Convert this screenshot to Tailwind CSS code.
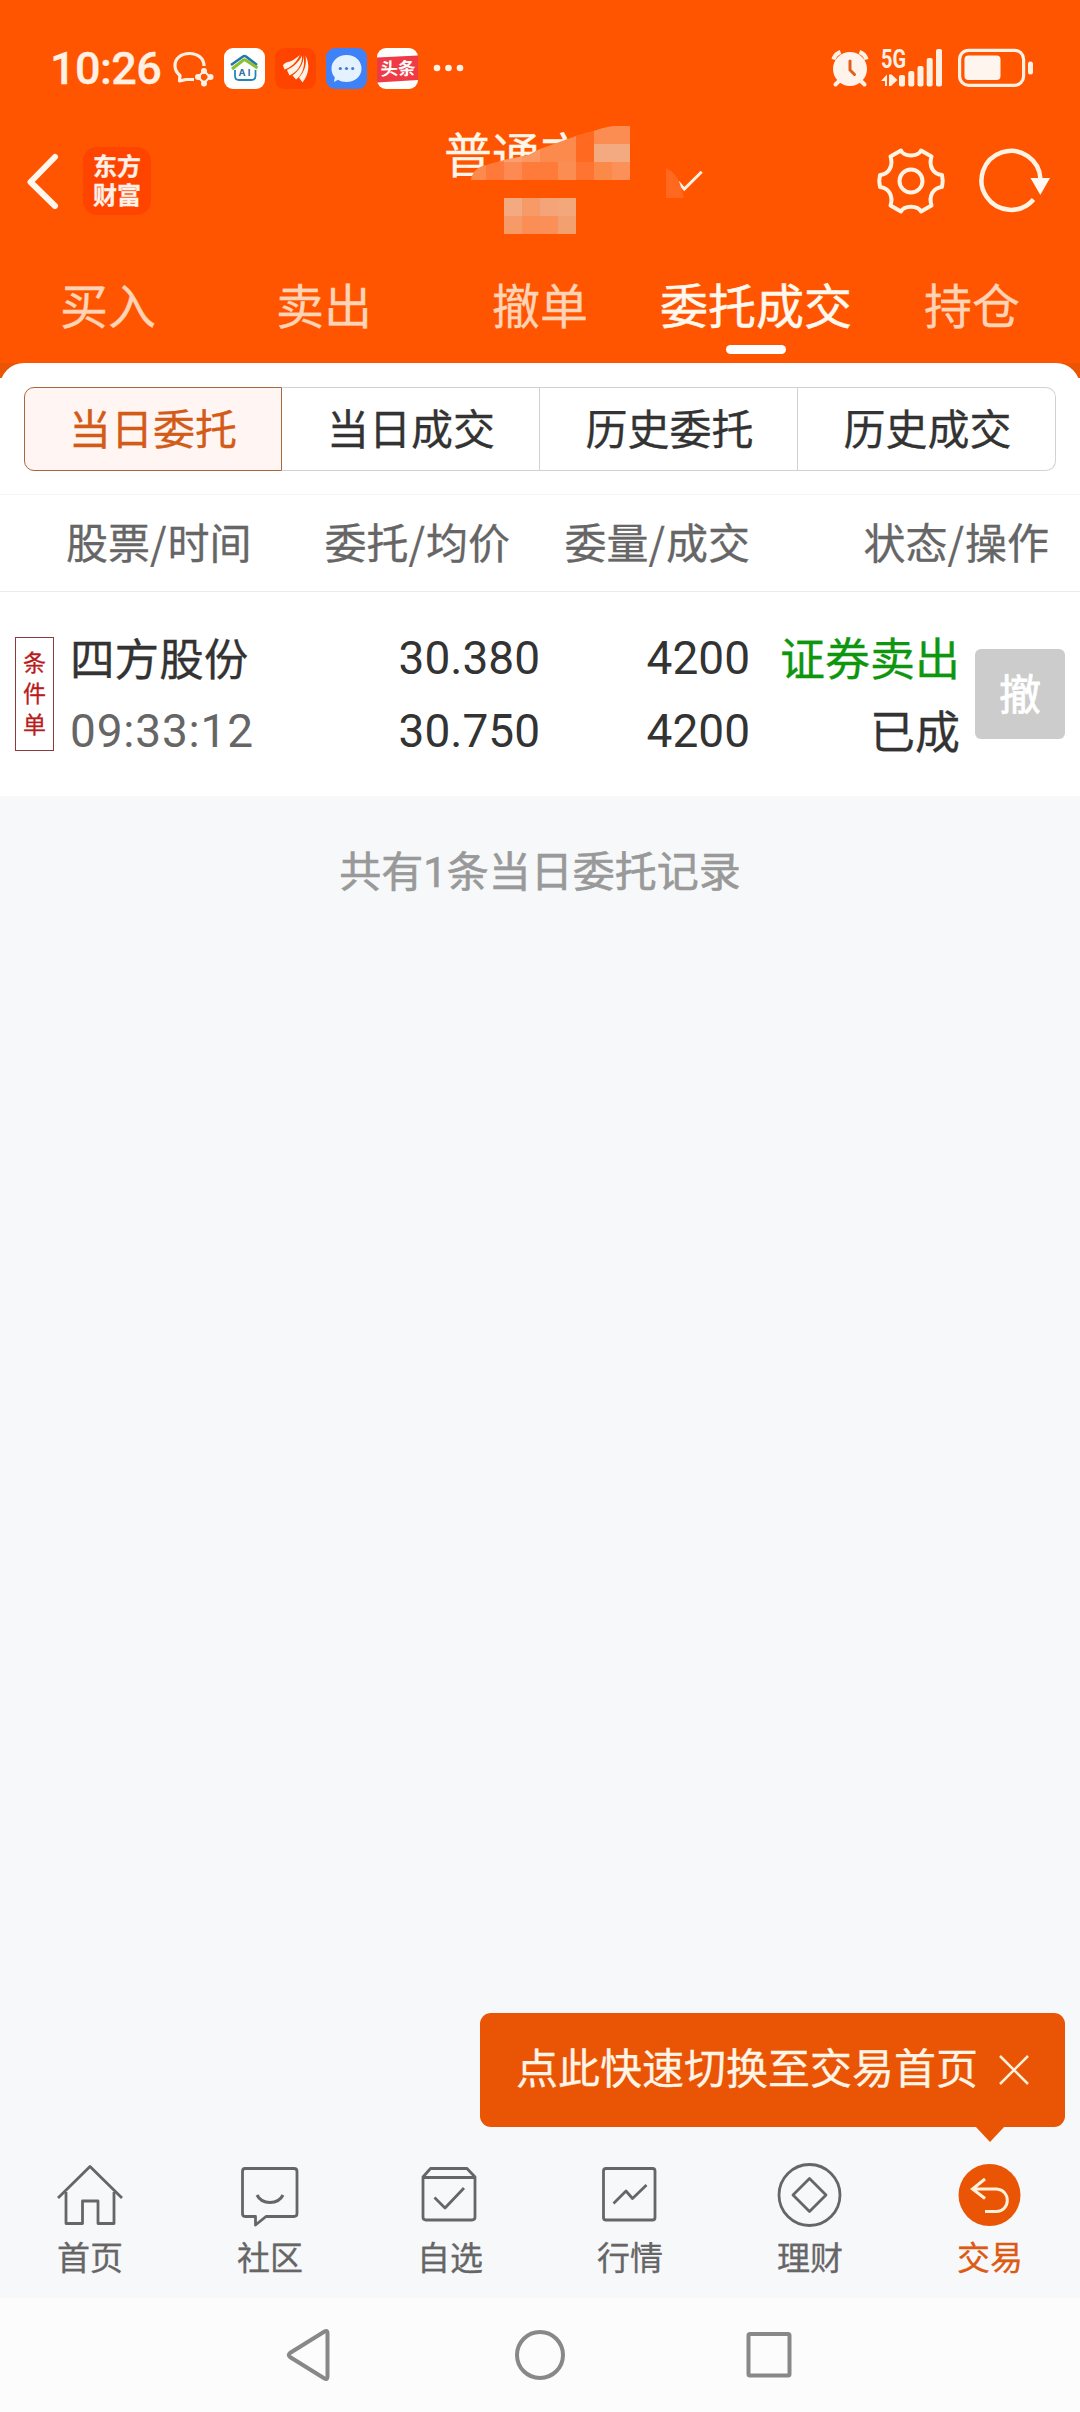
<!DOCTYPE html>
<html lang="zh-CN">
<head>
    <meta charset="UTF-8">
    <meta name="viewport" content="width=device-width, initial-scale=1.0">
    <title>委托成交</title>
    <script src="https://cdn.jsdelivr.net/npm/@tailwindcss/browser@4"></script>
    <style>
        body {
            font-family: 'Noto Sans CJK SC', sans-serif;
            -webkit-text-stroke: 0.3px;
        }
    </style>
</head>
<body class="bg-[#f7f8fa]">
<div class="w-[1080px] h-[2412px] flex flex-col overflow-hidden">

    <!-- Cabecera -->
    <header class="bg-[#ff5500] h-[363px] shrink-0">
        <!-- status bar -->
        <div class="h-[122px] pt-[14px] pl-[50px] pr-[47px] flex items-center">
            <div class="w-[123px] pt-[1px] font-['Roboto'] font-medium text-[45px] leading-[48px] tracking-[-0.6px] text-[#fff0e4]">10:26</div>
            <div class="flex items-center gap-[10px]">
                <svg class="w-[41px] h-[41px]" viewBox="0 0 41 41" fill="none">
                    <path d="M31 18C31 10 24.500 5.500 16.500 5.500C8 5.500 2 10.500 2 17.500C2 22 4 25 7 27.500L6.500 33L13 31.500H21" stroke="#fff0e4" stroke-width="3.2" stroke-linejoin="round"/>
                    <path d="M31 23L37 29L31 35L25 29Z" stroke="#fff0e4" stroke-width="2.200"/>
                    <g fill="#fff0e4"><circle cx="31" cy="23" r="3"/><circle cx="37.500" cy="29" r="3"/><circle cx="31" cy="35.500" r="3"/><circle cx="25" cy="29" r="3"/></g>
                </svg>
                <svg class="w-[41px] h-[41px]" viewBox="0 0 41 41" fill="none">
                    <rect width="41" height="41" rx="9" fill="#fff"/>
                    <path d="M7 17L19 8.500Q20.500 7.500 22 8.500L33 17" stroke="#2377ad" stroke-width="2.600"/>
                    <path d="M8 21L19.500 12Q20.500 11.500 21.500 12L33.500 20" stroke="#8abf2e" stroke-width="3"/>
                    <path d="M11 22V28Q11 32 15 32H27Q31.500 32 31.500 28V22" stroke="#2088b8" stroke-width="1.800"/>
                    <text x="14.500" y="27.500" font-size="9.500" font-weight="700" font-family="Inter" fill="#2c6fa6" textLength="12">AI</text>
                </svg>
                <svg class="w-[41px] h-[41px]" viewBox="0 0 41 41">
                    <rect width="41" height="41" rx="9" fill="#ff4400"/>
                    <g fill="#fff3e8">
                        <path d="M25 7C22 9 19 12 15 13.500C12 14.300 9.500 14.500 8 17.500L9.500 21.500C15 20 21 15 25 7Z"/>
                        <path d="M27 7.500C24 14.500 18 19 12 22L14.500 27.500C22 24 27.500 17 27 7.500Z"/>
                        <path d="M28.500 7.500C29 16 23.500 23 17.500 27.500L21 31.500C27 27 30.500 19 28.500 7.500Z"/>
                        <path d="M30.500 7.500C35.500 17 33.500 27 27.500 34.500L24 29.500C29.500 24 32 16 30.500 7.500Z"/>
                    </g>
                </svg>
                <svg class="w-[41px] h-[41px]" viewBox="0 0 41 41">
                    <rect width="41" height="41" rx="9" fill="#3f82f8"/>
                    <path d="M20.500 7C29.500 7 35.500 13 35.500 20.500C35.500 28.500 29 34 20.500 34C17 34 14.500 33.300 12 31.800L8 34L8.800 29.300C6.500 27 5.500 24 5.500 20.500C5.500 13 12 7 20.500 7Z" fill="#e4f2fe"/>
                    <g fill="#3f7be0"><circle cx="14.300" cy="20.500" r="1.600"/><circle cx="20.500" cy="20.500" r="1.600"/><circle cx="26.700" cy="20.500" r="1.600"/></g>
                </svg>
                <svg class="w-[41px] h-[41px]" viewBox="0 0 41 41">
                    <rect width="41" height="41" rx="9" fill="#fff"/>
                    <path d="M0 9.500L41 7.500V32L0 34.500Z" fill="#ee3b45"/>
                    <text x="3.500" y="27" font-size="17.500" font-weight="700" font-family="Noto Sans CJK SC" fill="#fff" transform="rotate(-2 20 20)">头条</text>
                </svg>
                <svg class="w-[41px] h-[41px] -ml-[4px]" viewBox="0 0 41 41" fill="#fff0e4">
                    <circle cx="13" cy="20" r="3.300"/><circle cx="24.500" cy="20" r="3.300"/><circle cx="36" cy="20" r="3.300"/>
                </svg>
            </div>
            <div class="ml-auto flex items-center">
                <svg class="w-[38px] h-[40px] mr-[12px]" viewBox="0 0 38 40">
                    <circle cx="19" cy="21" r="17" fill="#fff3ec"/>
                    <path d="M2.500 11.500A11 11 0 0 1 9.500 4M35.500 11.500A11 11 0 0 0 28.500 4" stroke="#fff0e4" stroke-width="4.200" fill="none"/>
                    <path d="M8 33L4.500 36.500M30 33L33.500 36.500" stroke="#fff0e4" stroke-width="4" stroke-linecap="round"/>
                    <path d="M19 13V22L23.500 26.500" stroke="#e0601a" stroke-width="3" fill="none" stroke-linecap="round"/>
                </svg>
                <svg class="w-[62px] h-[40px] mr-[15px] overflow-visible" viewBox="0 0 62 40" fill="#fff0e4">
                    <text x="0" y="19.500" font-size="25" font-weight="700" font-family="Roboto" textLength="25" lengthAdjust="spacingAndGlyphs">5G</text>
                    <path d="M0 33L6 26.500V38H4V33ZM8 26.500H10.500L16.500 32L10 38H8Z"/>
                    <rect x="18" y="27" width="6" height="11.500" rx="2"/>
                    <rect x="27.300" y="23" width="6" height="15.500" rx="2"/>
                    <rect x="36.500" y="18" width="6" height="20.500" rx="2"/>
                    <rect x="45.700" y="10" width="6" height="28.500" rx="2"/>
                    <rect x="55" y="1" width="6" height="37.500" rx="2"/>
                </svg>
                <svg class="w-[75px] h-[40px]" viewBox="0 0 75 40">
                    <rect x="1.600" y="2.300" width="64" height="35" rx="9" fill="none" stroke="#fff0e4" stroke-width="3.200"/>
                    <rect x="6.500" y="7.500" width="36" height="24.500" rx="4" fill="#fff5ef"/>
                    <rect x="70" y="13.500" width="5" height="13" rx="2.500" fill="#fff0e4"/>
                </svg>
            </div>
        </div>

        <!-- title bar -->
        <div class="relative h-[118px] pl-[27px] flex items-center">
            <svg class="w-[32px] h-[56px]" viewBox="0 0 32 56" fill="none">
                <path d="M28 4L3.500 29L28 53" stroke="#fff7ee" stroke-width="6" stroke-linecap="round" stroke-linejoin="round"/>
            </svg>
            <div class="ml-[24px] w-[68px] h-[68px] rounded-[14px] bg-[#ff4400] flex flex-col items-center justify-center pb-[5px] font-bold text-[24px] leading-[29px] text-[#fff0e8]">
                <span>东方</span>
                <span>财富</span>
            </div>
            <h1 class="ml-[293px] w-[144px] mt-[6px] self-start text-[48px] leading-[48px] text-[#fff6ea] whitespace-nowrap">普通交</h1>
            <svg class="ml-[88px] w-[28px] h-[28px]" viewBox="0 0 28 28" fill="none">
                <path d="M2 15L8.300 22L25.700 4.700" stroke="#fff0e0" stroke-width="3"/>
            </svg>
            <svg class="ml-[172px] w-[70px] h-[70px]" viewBox="-35 -35 70 70" fill="none" stroke="#fff3e4" stroke-width="4" stroke-linejoin="round">
                <path d="M-20.500 -24.500L-10 -30.500C-7 -24 7 -24 10 -30.500L20.500 -24.500C17.500 -15 22 -7 31 -6C32 -2 32 2 31 6C22 7 17.500 15 20.500 24.500L10 30.500C7 24 -7 24 -10 30.500L-20.500 24.500C-17.500 15 -22 7 -31 6C-32 2 -32 -2 -31 -6C-22 -7 -17.500 -15 -20.500 -24.500Z"/>
                <circle r="11.500"/>
            </svg>
            <svg class="ml-[31px] w-[76px] h-[70px]" viewBox="0 0 76 70" fill="none">
                <path d="M63.500 33A29.500 29.500 0 1 0 56.500 53.500" stroke="#fff3e4" stroke-width="4.500"/>
                <path d="M53.500 32H73L63.300 49Z" fill="#fff9f2"/>
            </svg>

            <!-- pixelated account name -->
            <svg class="absolute left-[468px] top-[4px] w-[216px] h-[108px]" viewBox="468 126 216 108">
                <clipPath id="blob"><path d="M471 180C472 172 478 166 487 165L504 160L529 155L540 149L576 136L594 131C605 127 612 126 620 126H630V180Z"/></clipPath>
                <g clip-path="url(#blob)">
                    <rect x="468" y="126" width="162" height="54" fill="#fb8a4c"/>
                    <rect x="576" y="126" width="18" height="36" fill="#ff6a20"/>
                    <rect x="594" y="126" width="36" height="18" fill="#fb8c52"/>
                    <rect x="504" y="144" width="18" height="18" fill="#f9a06c"/>
                    <rect x="522" y="144" width="18" height="18" fill="#fb9862"/>
                    <rect x="594" y="144" width="36" height="18" fill="#f3aa80"/>
                    <rect x="486" y="162" width="18" height="18" fill="#ff7a3a"/>
                    <rect x="504" y="162" width="18" height="18" fill="#fc8a52"/>
                    <rect x="522" y="162" width="36" height="18" fill="#ff7b3a"/>
                    <rect x="558" y="162" width="18" height="18" fill="#fb8d52"/>
                    <rect x="576" y="162" width="18" height="18" fill="#fe7430"/>
                    <rect x="594" y="162" width="18" height="18" fill="#fb8a48"/>
                    <rect x="612" y="162" width="18" height="18" fill="#fb9058"/>
                </g>
                <rect x="504" y="198" width="18" height="18" fill="#f3aa80"/>
                <rect x="522" y="198" width="18" height="18" fill="#f69a68"/>
                <rect x="540" y="198" width="18" height="18" fill="#f4a478"/>
                <rect x="558" y="198" width="18" height="18" fill="#f3a87c"/>
                <rect x="504" y="216" width="18" height="18" fill="#f69a68"/>
                <rect x="522" y="216" width="18" height="18" fill="#fa8e55"/>
                <rect x="540" y="216" width="18" height="18" fill="#fa9058"/>
                <rect x="558" y="216" width="18" height="18" fill="#f3a070"/>
                <path d="M666 168C674 172 678 178 680 184L684 198H666Z" fill="#ff681f"/>
            </svg>
        </div>

        <!-- tabs -->
        <nav class="grid grid-cols-5 pt-[31px] text-[48px] leading-[64px] text-center text-[#ffd3b5]">
            <div>买入</div>
            <div>卖出</div>
            <div>撤单</div>
            <div class="text-[#fff8ee] flex flex-col items-center [-webkit-text-stroke:0.5px]">
                委托成交
                <span class="mt-[10px] w-[60px] h-[9px] rounded-full bg-white"></span>
            </div>
            <div>持仓</div>
        </nav>
    </header>

    <main class="shrink-0">
        <div class="h-[15px] bg-[#e95504] overflow-hidden">
            <div class="h-[40px] bg-white rounded-t-[24px]"></div>
        </div>

        <!-- filter buttons -->
        <div class="h-[116px] bg-white px-[24px] pt-[9px]">
            <div class="grid grid-cols-4 h-[84px] text-[42px] leading-[78px] text-center text-[#333]">
                <div class="border border-[#a8683f] bg-[#fff6f3] rounded-l-[10px] text-[#d35a17]">当日委托</div>
                <div class="border-y border-r border-[#d0d2d3] pl-[1px]">当日成交</div>
                <div class="border-y border-r border-[#d0d2d3] pl-[2px]">历史委托</div>
                <div class="border-y border-r border-[#d0d2d3] pl-[2px] rounded-r-[10px]">历史成交</div>
            </div>
        </div>

        <!-- table head -->
        <div class="h-[98px] bg-white border-y border-t-[#f5f5f5] border-b-[#ececec] pl-[66px] pr-[31px] flex text-[42px] leading-[92px] text-[#666] whitespace-nowrap">
            <div class="w-[186px]">股票<span class="pr-[1px]">/</span>时间</div>
            <div class="w-[258px] text-right">委托<span class="pr-[1px]">/</span>均价</div>
            <div class="w-[240px] text-right">委量<span class="pr-[1px]">/</span>成交</div>
            <div class="flex-1 text-right">状态<span class="pr-[1px]">/</span>操作</div>
        </div>

        <!-- order row -->
        <div class="h-[204px] bg-white pl-[15px] pr-[15px] flex items-center text-[#333]">
            <div class="w-[39px] h-[114px] pb-[3px] shrink-0 border border-[#8c3a3a] flex flex-col items-center justify-center text-[23px] leading-[31px] text-[#b81c1c]">
                <span>条</span><span>件</span><span>单</span>
            </div>
            <div class="ml-[16px] w-[200px] -mt-[3px] leading-[73px]">
                <div class="text-[44.6px] whitespace-nowrap">四方股份</div>
                <div class="pt-[2px] -mb-[2px] font-['Roboto'] text-[46px] tracking-[0.8px] text-[#666] whitespace-nowrap [-webkit-text-stroke:0]">09:33:12</div>
            </div>
            <div class="w-[270px] mt-[2px] font-['Roboto'] text-[46px] leading-[73px] text-right [-webkit-text-stroke:0]">
                <div>30.380</div>
                <div>30.750</div>
            </div>
            <div class="w-[210px] mt-[2px] font-['Roboto'] text-[46px] leading-[73px] text-right [-webkit-text-stroke:0]">
                <div>4200</div>
                <div>4200</div>
            </div>
            <div class="w-[210px] -mt-[3px] text-[45px] leading-[73px] text-right">
                <div class="text-[#0f960f]">证券卖出</div>
                <div>已成</div>
            </div>
            <button class="ml-auto w-[90px] h-[90px] rounded-[6px] bg-[#ccc] text-white text-[42px] leading-[86px] pb-[4px] [-webkit-text-stroke:0.8px]">撤</button>
        </div>

        <p class="pt-[41px] text-center text-[42px] leading-[64px] text-[#999] [-webkit-text-stroke:0.6px]">共有<span class="font-['Roboto']">1</span>条当日委托记录</p>
    </main>

    <!-- bottom nav -->
    <footer class="relative mt-auto shrink-0">
        <div class="absolute left-[480px] -top-[130px] w-[585px] h-[114px] rounded-[11px] bg-[#e95504] pl-[36px] flex items-center text-[42px] text-[#fff4e6] whitespace-nowrap">
            <span class="-mt-[9px]">点此快速切换至交易首页</span>
            <svg class="ml-[20px] w-[32px] h-[32px]" viewBox="0 0 32 32"><path d="M2 2L30 30M30 2L2 30" stroke="#fff0dc" stroke-width="2.500"/></svg>
            <svg class="absolute left-[495px] top-[113px] w-[30px] h-[16px]" viewBox="0 0 30 16"><path d="M0 0H30L15 16Z" fill="#e95504"/></svg>
        </div>
        <div class="h-[155px] grid grid-cols-6 pt-[17px] text-[33px] leading-[52px] text-[#666]">
            <div class="flex flex-col items-center">
                <svg class="w-[70px] h-[70px]" viewBox="0 0 70 70" fill="none" stroke="#666" stroke-width="2.800">
                    <path d="M3 38L35 6.500L67 38" stroke-linejoin="round"/>
                    <path d="M11 32V63.500H27.500V41H43V63.500H59V32" stroke-linejoin="round"/>
                </svg>
                首页
            </div>
            <div class="flex flex-col items-center">
                <svg class="w-[70px] h-[70px]" viewBox="0 0 70 70" fill="none" stroke="#666" stroke-width="2.800" stroke-linejoin="round">
                    <path d="M10 8.500H59Q62 8.500 62 11.500V53.500Q62 56.500 59 56.500H31L20.500 65V56.500H10Q7.500 56.500 7.500 53.500V11.500Q7.500 8.500 10 8.500Z"/>
                    <path d="M22 35C27 45 43 45 48 35" stroke-width="3"/>
                </svg>
                社区
            </div>
            <div class="flex flex-col items-center">
                <svg class="w-[70px] h-[70px]" viewBox="0 0 70 70" fill="none" stroke="#666" stroke-width="2.800" stroke-linejoin="round">
                    <path d="M8 17L15.500 8.500H52L60 17V57Q60 60 57 60H11Q8 60 8 57ZM8 17.500H60"/>
                    <path d="M19.500 37.500L30 48L49 28"/>
                </svg>
                自选
            </div>
            <div class="flex flex-col items-center">
                <svg class="w-[70px] h-[70px]" viewBox="0 0 70 70" fill="none" stroke="#666" stroke-width="2.800" stroke-linejoin="round">
                    <rect x="8.500" y="8.500" width="51.500" height="51.500" rx="2.500"/>
                    <path d="M18.500 43.500L31 31L37.500 38.500L51.500 25"/>
                </svg>
                行情
            </div>
            <div class="flex flex-col items-center">
                <svg class="w-[70px] h-[70px]" viewBox="0 0 70 70" fill="none" stroke="#666" stroke-width="2.800" stroke-linejoin="round">
                    <circle cx="34.500" cy="35" r="30.500"/>
                    <path d="M34.500 18.500L51 35L34.500 51.500L18 35Z"/>
                </svg>
                理财
            </div>
            <div class="flex flex-col items-center text-[#dc5a14]">
                <svg class="w-[70px] h-[70px]" viewBox="0 0 70 70" fill="none" stroke="#fff0dc" stroke-width="3">
                    <circle cx="34.500" cy="35" r="31" fill="#e95504" stroke="none"/>
                    <path d="M30 19L17.500 29L30 38.500M17.500 29H41.500C56 30 56 51 41 51.500H30"/>
                </svg>
                交易
            </div>
        </div>
        <!-- system keys -->
        <div class="h-[114px] bg-[#fcfcfc] flex items-center pl-[283px]">
            <svg class="w-[50px] h-[54px]" viewBox="0 0 50 54" fill="none"><path d="M41.500 3.500Q44.500 2 44.500 5V48.500Q44.500 52 41.500 50.500L7 29Q4.500 27 7 25Z" stroke="#888" stroke-width="4"/></svg>
            <svg class="ml-[180px] w-[54px] h-[54px]" viewBox="0 0 54 54" fill="none"><circle cx="27" cy="27" r="23" stroke="#888" stroke-width="4"/></svg>
            <svg class="ml-[175px] w-[54px] h-[54px]" viewBox="0 0 54 54" fill="none"><rect x="6.500" y="6" width="41" height="41.500" rx="1.500" stroke="#888" stroke-width="4"/></svg>
        </div>
    </footer>
</div>
</body>
</html>
